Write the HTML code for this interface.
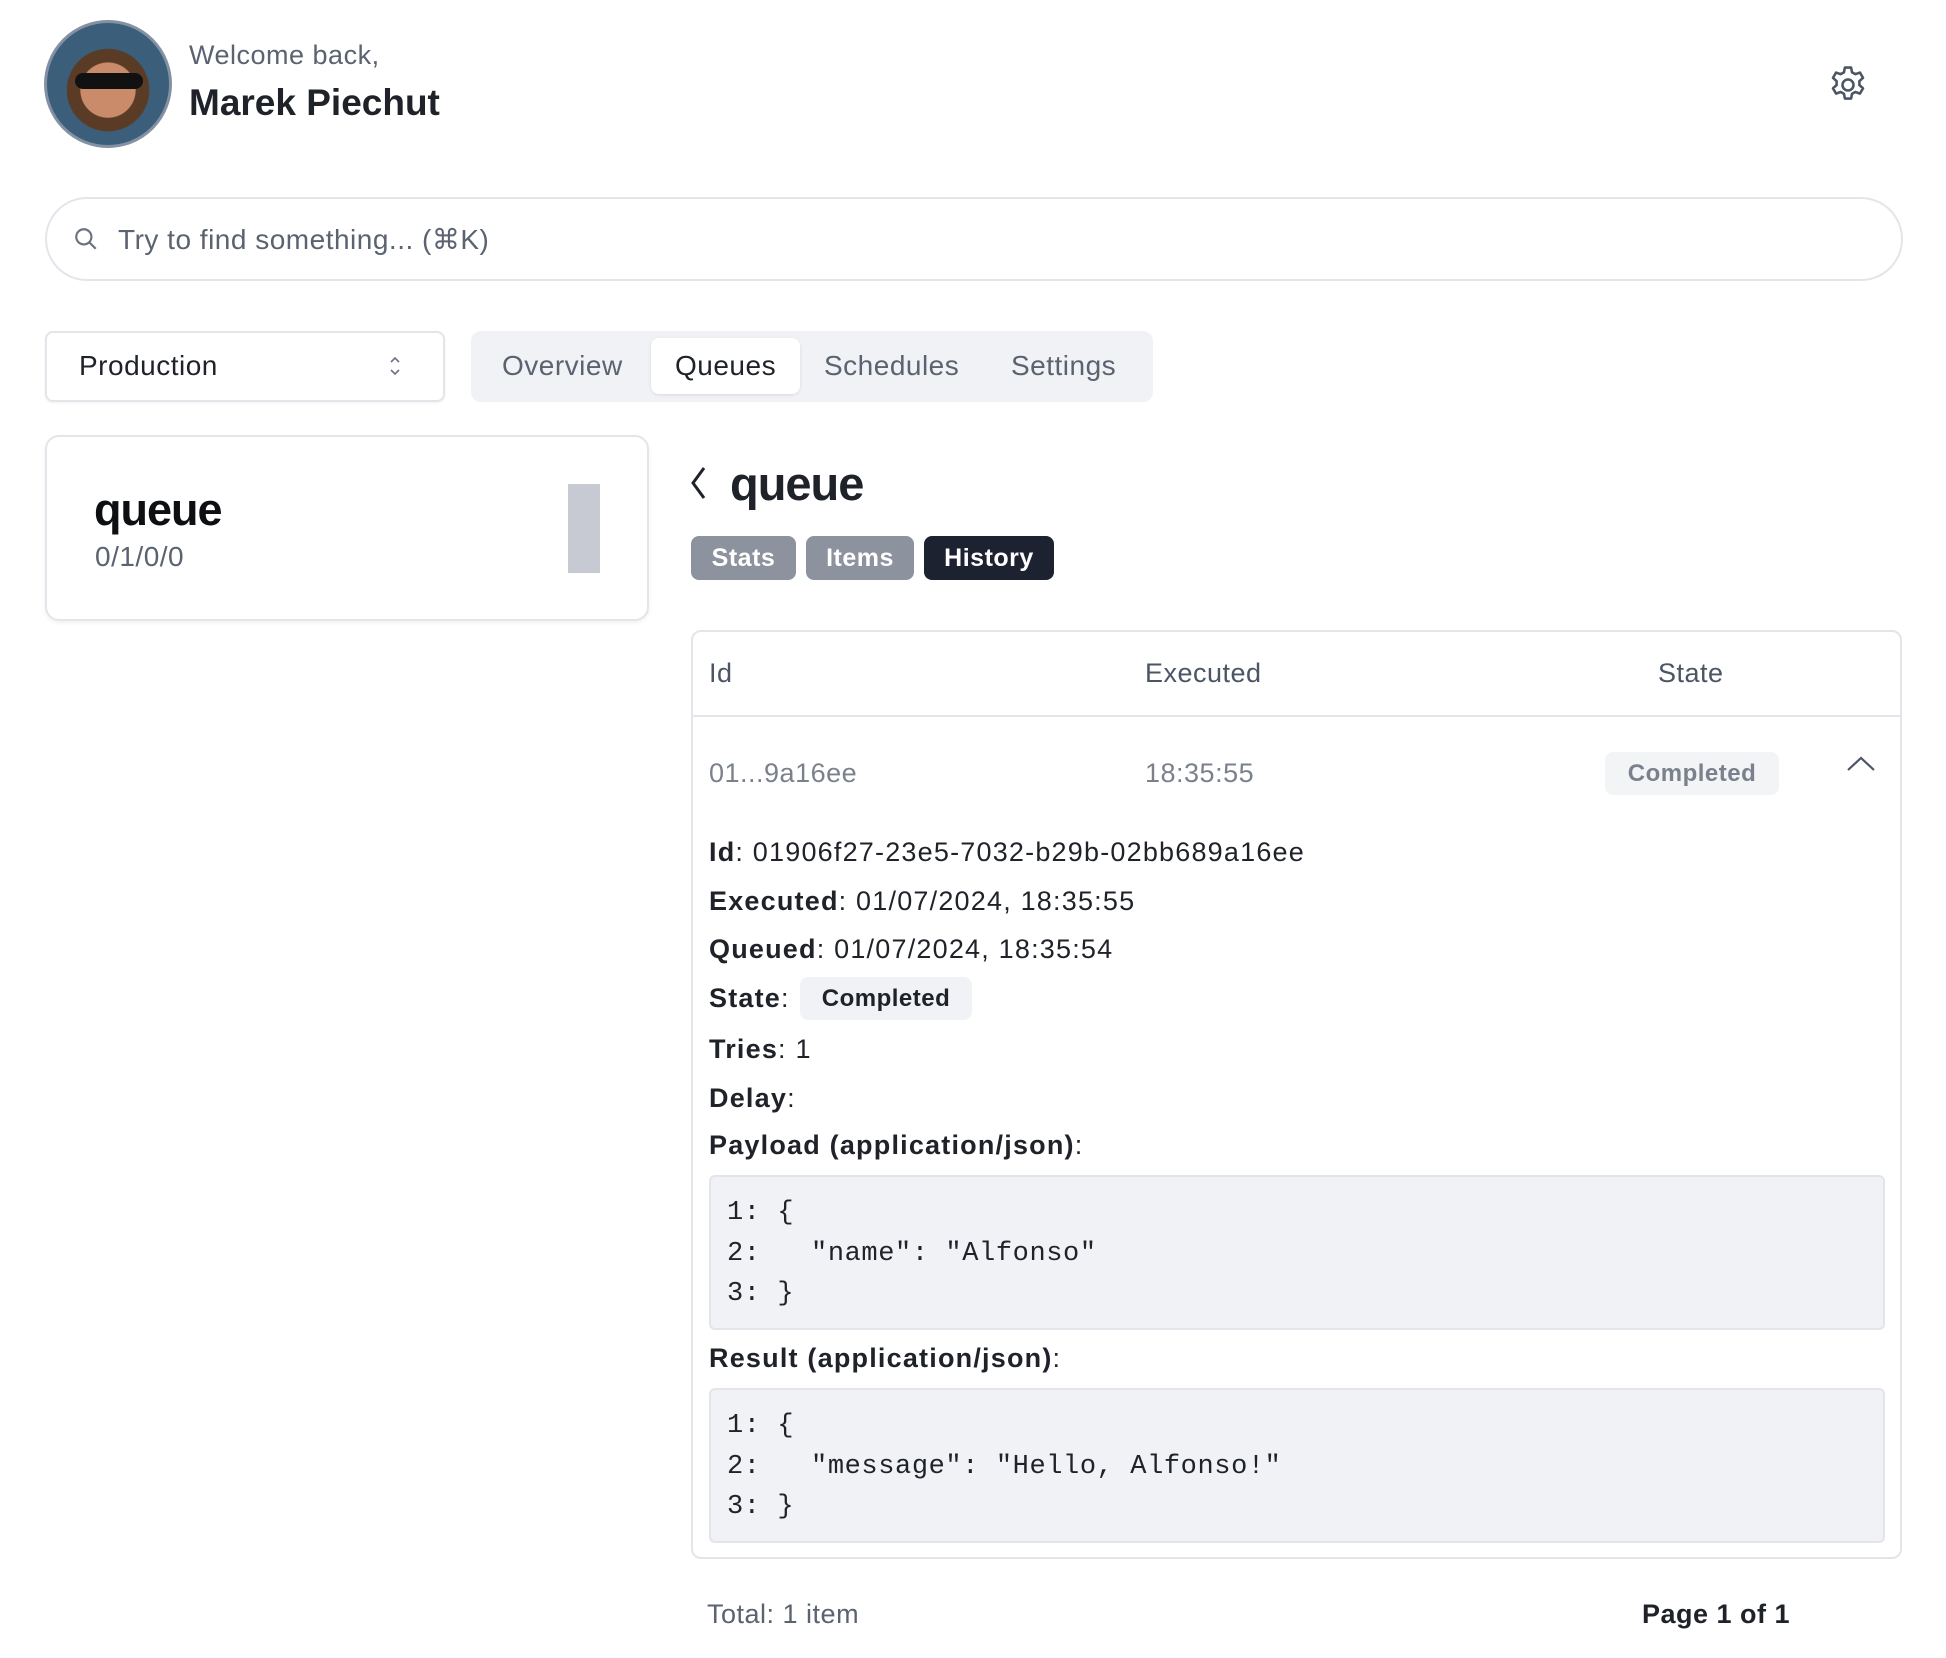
<!DOCTYPE html>
<html><head><meta charset="utf-8"><style>
*{box-sizing:border-box;margin:0;padding:0}
body{width:1946px;height:1658px;background:#fff;font-family:"Liberation Sans",sans-serif;color:#1f2329;position:relative;overflow:hidden;letter-spacing:0.5px}
.a{position:absolute;white-space:nowrap}
pre.a{white-space:pre}
.mono{font-family:"Liberation Mono",monospace;letter-spacing:0.6px}
.lbl{font-weight:bold}
.d{letter-spacing:1.2px}
</style></head><body>
<div class="a" style="left:44px;top:20px;width:128px;height:128px;border-radius:50%;border:3px solid #8491a3;background:radial-gradient(circle at 50% 55%,#c98b6a 0 30%,#5a3b26 31% 45%,#3b5f7a 46%);overflow:hidden">
<div class="a" style="left:28px;top:50px;width:68px;height:16px;background:#111;border-radius:8px"></div>
</div>
<div class="a" style="left:189px;top:40px;font-size:27px;color:#5b6270">Welcome back,</div>
<div class="a" style="left:189px;top:82px;font-size:37px;font-weight:bold;color:#1f2329;letter-spacing:0">Marek Piechut</div>
<svg class="a" style="left:1826px;top:63px" width="44" height="44" viewBox="0 0 24 24" fill="none" stroke="#4b5563" stroke-width="1.4" stroke-linejoin="round"><path d="M10.3 2.5h3.4l.5 2.6 1.8 1 2.5-.9 1.7 2.9-2 1.8v2.1l2 1.8-1.7 2.9-2.5-.9-1.8 1-.5 2.6h-3.4l-.5-2.6-1.8-1-2.5.9-1.7-2.9 2-1.8v-2.1l-2-1.8 1.7-2.9 2.5.9 1.8-1z"/><circle cx="12" cy="12" r="3"/></svg>

<div class="a" style="left:45px;top:197px;width:1858px;height:84px;border:2px solid #e3e5ea;border-radius:42px"></div>
<svg class="a" style="left:73px;top:226px" width="26" height="26" viewBox="0 0 24 24" fill="none" stroke="#6b7280" stroke-width="2"><circle cx="10" cy="10" r="7"/><path d="M15 15l6 6"/></svg>
<div class="a" style="left:118px;top:223px;font-size:28px;color:#5b6270">Try to find something... (⌘K)</div>

<div class="a" style="left:45px;top:331px;width:400px;height:71px;border:2px solid #e3e5ea;border-radius:8px;box-shadow:0 1px 2px rgba(0,0,0,.06)"></div>
<div class="a" style="left:79px;top:350px;font-size:28px;color:#1f2329">Production</div>
<svg class="a" style="left:387px;top:353px" width="16" height="26" viewBox="0 0 16 26" fill="none" stroke="#6b7280" stroke-width="1.6"><path d="M4 9l4-4 4 4M4 17l4 4 4-4"/></svg>

<div class="a" style="left:471px;top:331px;width:682px;height:71px;background:#f1f2f5;border-radius:10px"></div>
<div class="a" style="left:651px;top:338px;width:149px;height:56px;background:#fff;border-radius:8px;box-shadow:0 1px 3px rgba(0,0,0,.1)"></div>
<div class="a" style="left:502px;top:350px;font-size:28px;color:#5b6270">Overview</div>
<div class="a" style="left:675px;top:350px;font-size:28px;color:#1f2329">Queues</div>
<div class="a" style="left:824px;top:350px;font-size:28px;color:#5b6270">Schedules</div>
<div class="a" style="left:1011px;top:350px;font-size:28px;color:#5b6270">Settings</div>

<div class="a" style="left:45px;top:435px;width:604px;height:186px;border:2px solid #e3e5ea;border-radius:14px;box-shadow:0 2px 4px rgba(0,0,0,.06)"></div>
<div class="a" style="left:94px;top:484px;font-size:45px;font-weight:bold;color:#0d0f12;letter-spacing:-1px">queue</div>
<div class="a" style="left:95px;top:541px;font-size:28px;color:#5b6270">0/1/0/0</div>
<div class="a" style="left:568px;top:484px;width:32px;height:89px;background:#c7cad2"></div>

<svg class="a" style="left:686px;top:462px" width="26" height="42" viewBox="0 0 26 42" fill="none" stroke="#1f2329" stroke-width="3"><path d="M18 6L7 21l11 15"/></svg>
<div class="a" style="left:730px;top:456px;font-size:47px;font-weight:bold;color:#1f2329;letter-spacing:-1px">queue</div>

<div class="a" style="left:691px;top:536px;width:105px;height:44px;background:#8c939e;border-radius:8px;color:#fff;font-weight:bold;font-size:25px;text-align:center;line-height:44px">Stats</div>
<div class="a" style="left:806px;top:536px;width:108px;height:44px;background:#8c939e;border-radius:8px;color:#fff;font-weight:bold;font-size:25px;text-align:center;line-height:44px">Items</div>
<div class="a" style="left:924px;top:536px;width:130px;height:44px;background:#1c2230;border-radius:8px;color:#fff;font-weight:bold;font-size:25px;text-align:center;line-height:44px">History</div>

<div class="a" style="left:691px;top:630px;width:1211px;height:929px;border:2px solid #e3e5ea;border-radius:10px"></div>
<div class="a" style="left:691px;top:715px;width:1211px;height:2px;background:#e3e5ea"></div>
<div class="a" style="left:709px;top:658px;font-size:27px;color:#4b5563">Id</div>
<div class="a" style="left:1145px;top:658px;font-size:27px;color:#4b5563">Executed</div>
<div class="a" style="left:1658px;top:658px;font-size:27px;color:#4b5563">State</div>

<div class="a" style="left:709px;top:758px;font-size:27px;color:#7b818c">01...9a16ee</div>
<div class="a" style="left:1145px;top:758px;font-size:27px;color:#7b818c">18:35:55</div>
<div class="a" style="left:1605px;top:752px;width:174px;height:43px;background:#f3f4f6;border-radius:8px;font-size:24px;font-weight:bold;color:#7b818c;text-align:center;line-height:43px">Completed</div>
<svg class="a" style="left:1845px;top:754px" width="32" height="20" viewBox="0 0 32 20" fill="none" stroke="#4b5563" stroke-width="2.2"><path d="M3 16L16 4l13 12"/></svg>

<div class="a d" style="left:709px;top:837px;font-size:27px"><span class="lbl">Id</span>: 01906f27-23e5-7032-b29b-02bb689a16ee</div>
<div class="a d" style="left:709px;top:886px;font-size:27px"><span class="lbl">Executed</span>: 01/07/2024, 18:35:55</div>
<div class="a d" style="left:709px;top:934px;font-size:27px"><span class="lbl">Queued</span>: 01/07/2024, 18:35:54</div>
<div class="a d" style="left:709px;top:983px;font-size:27px"><span class="lbl">State</span>:</div>
<div class="a" style="left:800px;top:977px;width:172px;height:43px;background:#f1f2f5;border-radius:8px;font-size:24px;font-weight:bold;color:#1f2329;text-align:center;line-height:43px">Completed</div>
<div class="a d" style="left:709px;top:1034px;font-size:27px"><span class="lbl">Tries</span>: 1</div>
<div class="a d" style="left:709px;top:1083px;font-size:27px"><span class="lbl">Delay</span>:</div>
<div class="a d" style="left:709px;top:1130px;font-size:27px"><span class="lbl">Payload (application/json)</span>:</div>

<div class="a" style="left:709px;top:1175px;width:1176px;height:155px;background:#f1f2f5;border:2px solid #e3e5ea;border-radius:6px"></div>
<pre class="a mono" style="left:727px;top:1193px;font-size:27px;line-height:40.5px;color:#1f2329">1: {
2:   "name": "Alfonso"
3: }</pre>
<div class="a d" style="left:709px;top:1343px;font-size:27px"><span class="lbl">Result (application/json)</span>:</div>
<div class="a" style="left:709px;top:1388px;width:1176px;height:155px;background:#f1f2f5;border:2px solid #e3e5ea;border-radius:6px"></div>
<pre class="a mono" style="left:727px;top:1406px;font-size:27px;line-height:40.5px;color:#1f2329">1: {
2:   "message": "Hello, Alfonso!"
3: }</pre>

<div class="a" style="left:707px;top:1599px;font-size:27px;color:#5b6270">Total: 1 item</div>
<div class="a" style="left:1590px;top:1599px;font-size:27px;font-weight:bold;color:#1f2329;width:200px;text-align:right">Page 1 of 1</div>
</body></html>
